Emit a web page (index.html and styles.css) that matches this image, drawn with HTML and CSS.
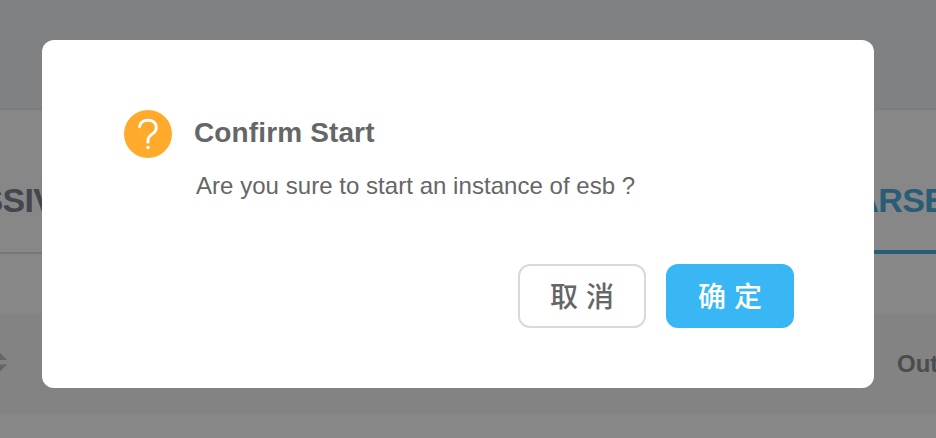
FILE: index.html
```html
<!DOCTYPE html>
<html lang="zh">
<head>
<meta charset="utf-8">
<title>Confirm Start</title>
<link rel="stylesheet" href="styles.css">
</head>
<body>
<div class="page">
  <header class="topbar"></header>
  <nav class="tabs">
    <div class="tab tab-left"><span>MASSIVE</span></div>
    <div class="tab tab-active"><span>PARSER</span></div>
  </nav>
  <div class="table-head">
    <svg class="sorter" width="18" height="22" viewBox="0 0 18 22"><path d="M9 0 18 9H0ZM0 13.500H18L9 22.500Z"/></svg>
    <span class="column">Output</span>
  </div>
</div>
<div class="modal" role="dialog">
  <div class="body">
    <svg class="icon" width="48" height="48" viewBox="0 0 48 48">
      <circle cx="24" cy="24" r="24" fill="#ffaa2b"/>
      <path d="M15.500 16.800C15.900 12.700 19.300 10.200 24 10.200C29 10.200 32.300 13.100 32.300 17.400C32.300 20.400 30.800 22.300 28.100 24.100C25.100 26.100 24 27.600 24 30.300V32.200" fill="none" stroke="#fff" stroke-width="2.900" stroke-linecap="round"/>
      <circle cx="24" cy="37.500" r="1.800" fill="#fff"/>
    </svg>
    <div class="copy">
      <h1 class="title">Confirm Start</h1>
      <p class="message">Are you sure to start an instance of esb ?</p>
    </div>
  </div>
  <div class="actions">
    <button class="btn">取 消</button>
    <button class="btn primary">确 定</button>
  </div>
</div>
</body>
</html>
```
FILE: styles.css
```css
* { box-sizing: border-box; }
body {
  margin: 0;
  width: 936px;
  height: 438px;
  overflow: hidden;
  font-family: "Liberation Sans", "Noto Sans CJK SC", sans-serif;
  background: #878787;
}
.page { overflow: hidden; height: 438px; }
.topbar { height: 110px; background: #808182; border-bottom: 2px solid #7c7d7e; }
.tabs {
  height: 144px;
  display: flex;
  justify-content: space-between;
  border-bottom: 2px solid #767676;
  font-size: 34px;
  line-height: 40px;
  font-weight: 700;
  letter-spacing: -.7px;
}
.tab { height: 144px; padding-top: 70px; white-space: nowrap; }
.tab-left { color: #43464c; margin-left: -71px; }
.tab-active { width: 101px; color: #295c76; border-bottom: 4px solid #295c76; }
.table-head {
  height: 100px;
  margin-top: 60px;
  display: flex;
  align-items: center;
  justify-content: space-between;
  background: #838383;
}
.sorter { margin: -5px 0 0 -11px; fill: #656565; }
.column { width: 39px; color: #4c4c4c; font-size: 24px; font-weight: 700; }
.modal {
  position: absolute;
  left: 42px;
  top: 40px;
  width: 832px;
  height: 348px;
  padding: 70px 80px 60px 82px;
  border-radius: 12px;
  background: #fff;
  display: flex;
  flex-direction: column;
  justify-content: space-between;
  color: #666;
}
.body { display: flex; gap: 22px; }
.icon { flex: none; }
.title { margin: 2px 0 0; font-size: 28px; line-height: 42px; letter-spacing: .13px; white-space: nowrap; }
.message { margin: 14px 0 0 2px; font-size: 24px; line-height: 36px; letter-spacing: .04px; white-space: nowrap; }
.actions { display: flex; justify-content: flex-end; gap: 20px; }
.btn {
  width: 128px;
  height: 64px;
  padding: 3px 0 0;
  border: 2px solid #d9d9d9;
  border-radius: 12px;
  background: #fff;
  color: #666;
  font: 500 28px/40px "Liberation Sans", "Noto Sans CJK SC", sans-serif;
}
.primary { border-color: #38b7f4; background: #38b7f4; color: #fff; }
```
